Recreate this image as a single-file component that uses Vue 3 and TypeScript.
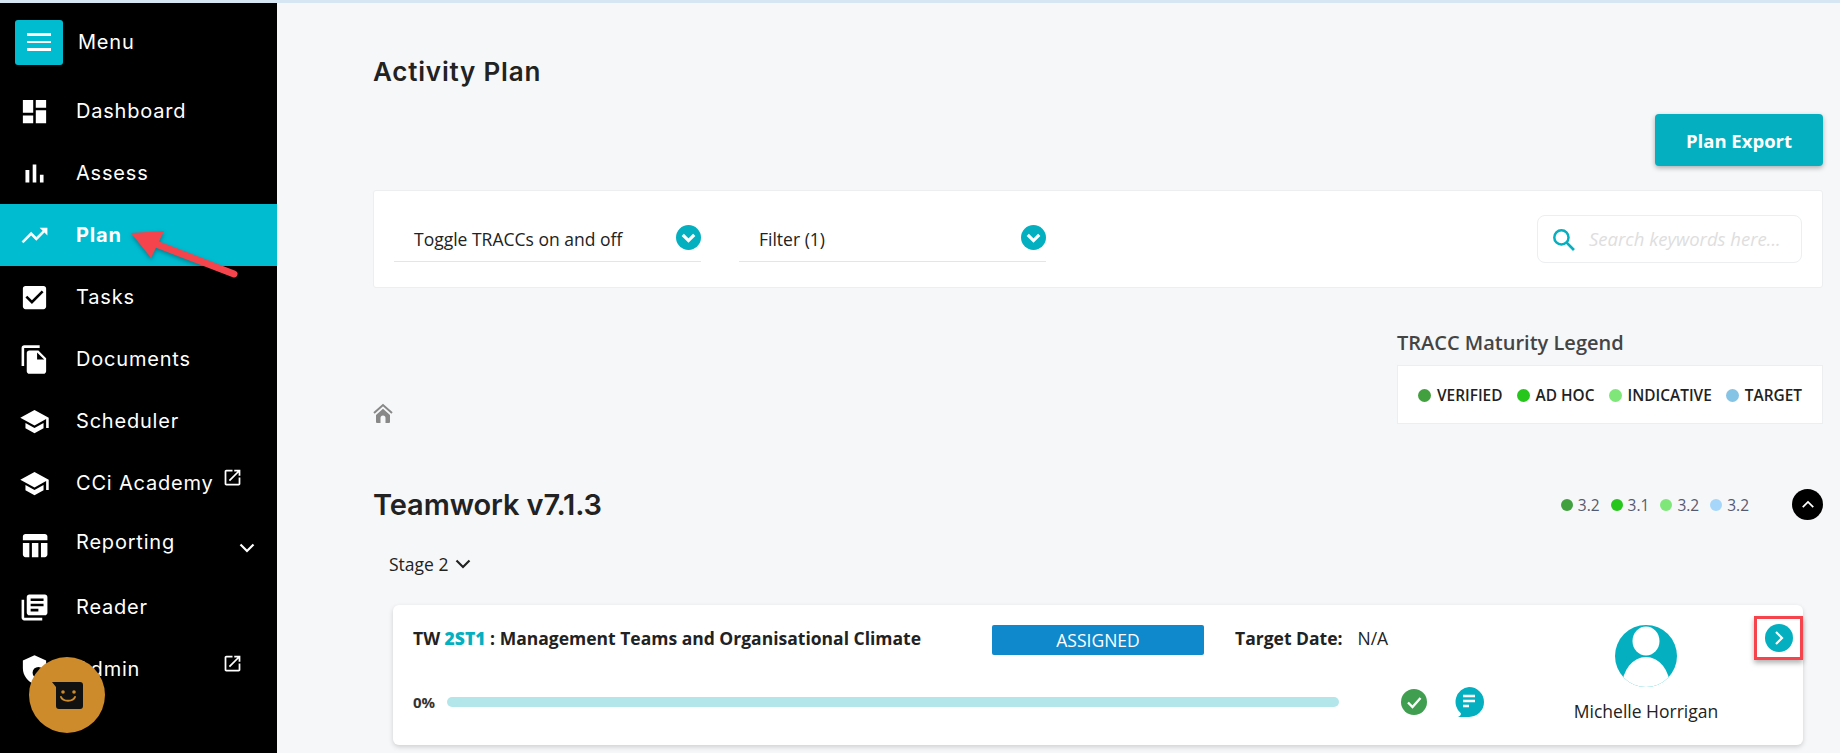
<script setup lang="ts">
interface NavItem {
  label: string
  path: string
  active?: boolean
  external?: boolean
  expand?: boolean
}
const launch = 'M19 19H5V5h7V3H5c-1.11 0-2 .9-2 2v14c0 1.1.89 2 2 2h14c1.1 0 2-.9 2-2v-7h-2v7zM14 3v2h3.59l-9.83 9.83 1.41 1.41L19 6.41V10h2V3h-7z'
const school = 'M5 13.18v4L12 21l7-3.82v-4L12 17l-7-3.82zM12 3L1 9l11 6 9-4.91V17h2V9L12 3z'
const nav: NavItem[] = [
  { label: 'Dashboard', path: 'M3 13h8V3H3v10zm0 8h8v-6H3v6zm10 0h8V11h-8v10zm0-18v6h8V3h-8z' },
  { label: 'Assess', path: 'M5 9.2h3V19H5zM10.6 5h2.8v14h-2.8zm5.6 8H19v6h-2.8z' },
  { label: 'Plan', active: true, path: 'M16 6l2.29 2.29-4.88 4.88-4-4L2 16.59 3.41 18l6-6 4 4 6.3-6.29L22 12V6z' },
  { label: 'Tasks', path: 'M19 3H5c-1.11 0-2 .9-2 2v14c0 1.1.89 2 2 2h14c1.11 0 2-.9 2-2V5c0-1.1-.89-2-2-2zm-9 14l-5-5 1.41-1.41L10 14.17l7.59-7.59L19 8l-9 9z' },
  { label: 'Documents', path: 'M16 1H4c-1.1 0-2 .9-2 2v14h2V3h12V1zm-1 4l6 6v10c0 1.1-.9 2-2 2H7.99C6.89 23 6 22.1 6 21l.01-14c0-1.1.89-2 1.99-2h7zm-1 7h5.5L14 6.5V12z' },
  { label: 'Scheduler', path: school },
  { label: 'CCi Academy', path: school, external: true },
  { label: 'Reporting', expand: true, path: 'M10 10.02h5V21h-5zM17 21h3c1.1 0 2-.9 2-2v-9h-5v11zm3-18H5c-1.1 0-2 .9-2 2v3h19V5c0-1.1-.9-2-2-2zM3 19c0 1.1.9 2 2 2h3V10H3v9z' },
  { label: 'Reader', path: 'M4 6H2v14c0 1.1.9 2 2 2h14v-2H4V6zm16-4H8c-1.1 0-2 .9-2 2v12c0 1.1.9 2 2 2h12c1.1 0 2-.9 2-2V4c0-1.1-.9-2-2-2zm-1 9H9V9h10v2zm-4 4H9v-2h6v2zm4-8H9V5h10v2z' },
  { label: 'Admin', external: true, path: 'M12 1L3 5v6c0 5.55 3.84 10.74 9 12 5.16-1.26 9-6.45 9-12V5l-9-4zm3 18a4.5 4.5 0 1 1 0-9 4.5 4.5 0 0 1 0 9z' }
]
const legend = [
  { label: 'VERIFIED', color: '#43a03f' },
  { label: 'AD HOC', color: '#27c61d' },
  { label: 'INDICATIVE', color: '#7fe67a' },
  { label: 'TARGET', color: '#86c4e6' }
]
const scores = [
  { value: '3.2', color: '#43a03f' },
  { value: '3.1', color: '#27c61d' },
  { value: '3.2', color: '#7fe67a' },
  { value: '3.2', color: '#a6d6fa' }
]
</script>

<template>
  <div class="page">
    <div class="strip"></div>
    <div class="body">
      <aside class="side">
        <div class="menu-row">
          <button class="burger"><span></span><span></span><span></span></button>
          <span class="menu-label">Menu</span>
        </div>
        <a v-for="n in nav" :key="n.label" class="nav" :class="{ active: n.active, lifted: n.expand }">
          <svg class="nav-icon" viewBox="0 0 24 24"><path :d="n.path" fill="#fff" fill-rule="evenodd" /></svg>
          <span class="nav-text">{{ n.label }}</span>
          <svg v-if="n.external" class="ext" viewBox="0 0 24 24"><path :d="launch" fill="#fff" /></svg>
          <svg v-if="n.expand" class="expand" viewBox="0 0 16 10"><path d="M1.5 1.5 8 8l6.500-6.500" fill="none" stroke="#fff" stroke-width="2.200" /></svg>
        </a>
      </aside>

      <main class="main">
        <h1 class="title">Activity Plan</h1>
        <div class="export-row"><button class="export">Plan Export</button></div>

        <section class="filters">
          <div class="select">
            <span>Toggle TRACCs on and off</span>
            <i class="round"><svg viewBox="0 0 24 24"><path d="M6.500 9.500 12 15l5.500-5.500" fill="none" stroke="#fff" stroke-width="3" /></svg></i>
          </div>
          <div class="select">
            <span>Filter (1)</span>
            <i class="round"><svg viewBox="0 0 24 24"><path d="M6.500 9.500 12 15l5.500-5.500" fill="none" stroke="#fff" stroke-width="3" /></svg></i>
          </div>
          <div class="search">
            <svg viewBox="0 0 22 22"><circle cx="9" cy="9" r="6.800" fill="none" stroke="#04b0c0" stroke-width="2.400" /><path d="M14 14l7 7" stroke="#04b0c0" stroke-width="2.600" /></svg>
            <span>Search keywords here...</span>
          </div>
        </section>

        <div class="crumb-row">
          <svg class="home" viewBox="0 0 20 20"><path d="M1 10 10 2l9 8" fill="none" stroke="#888" stroke-width="2" /><path d="M3 12 10 5.800 17 12v7a1 1 0 0 1-1 1h-3.500v-5a2.500 2.500 0 0 0-5 0v5H4a1 1 0 0 1-1-1z" fill="#888" /></svg>
          <div class="legend-wrap">
            <h3>TRACC Maturity Legend</h3>
            <div class="legend">
              <span v-for="l in legend" :key="l.label" class="legend-item"><i :style="{ background: l.color }"></i>{{ l.label }}</span>
            </div>
          </div>
        </div>

        <div class="team-row">
          <h2>Teamwork v7.1.3</h2>
          <div class="scores">
            <span v-for="(s, i) in scores" :key="i" class="score"><i :style="{ background: s.color }"></i>{{ s.value }}</span>
          </div>
          <button class="up"><svg viewBox="0 0 16 10"><path d="M2 8l6-6 6 6" fill="none" stroke="#fff" stroke-width="2" /></svg></button>
        </div>

        <div class="stage">Stage 2 <svg viewBox="0 0 16 10"><path d="M1.500 1.500 8 8l6.500-6.500" fill="none" stroke="#222" stroke-width="2.200" /></svg></div>

        <article class="card">
          <div class="card-left">
            <div class="card-top">
              <div class="card-title">TW <b>2ST1</b> : Management Teams and Organisational Climate</div>
              <div class="badge">ASSIGNED</div>
              <div class="target"><strong>Target Date:</strong><span>N/A</span></div>
            </div>
            <div class="card-bottom">
              <span class="pct">0%</span>
              <div class="bar"></div>
              <svg class="check" viewBox="0 0 26 26"><circle cx="13" cy="13" r="13" fill="#3f9e4f" /><path d="M7 13.500l4.500 4.500L19.500 9" fill="none" stroke="#fff" stroke-width="2.400" /></svg>
              <svg class="chat" viewBox="0 0 30 30"><path d="M15 0a15 15 0 0 1 0 30H4c2-1 3-2 3-3.500A15 15 0 0 1 15 0z" fill="#04b0c0" /><path d="M9 9h12M9 14h12M9 19h6" stroke="#fff" stroke-width="2.400" /></svg>
            </div>
          </div>
          <div class="person">
            <svg class="avatar" viewBox="0 0 62 62">
              <defs><clipPath id="ava"><circle cx="31" cy="31" r="31" /></clipPath></defs>
              <circle cx="31" cy="31" r="31" fill="#04b0c0" />
              <g clip-path="url(#ava)" fill="#fff"><ellipse cx="31" cy="16" rx="13.500" ry="14.500" /><ellipse cx="31" cy="62" rx="24" ry="30" /></g>
            </svg>
            <div class="name">Michelle Horrigan</div>
          </div>
          <div class="next-box">
            <i class="next"><svg viewBox="0 0 12 16"><path d="M3 2l6 6-6 6" fill="none" stroke="#fff" stroke-width="2.200" /></svg></i>
          </div>
        </article>
      </main>
    </div>

    <svg class="arrow" viewBox="0 0 130 70" aria-hidden="true">
      <path d="M114 54 36 24" stroke="#f5444b" stroke-width="7" stroke-linecap="round" />
      <path d="M11 13 44 11 31 38z" fill="#f5444b" />
    </svg>
    <div class="bot">
      <svg viewBox="0 0 31 27"><path d="M0 0h28a3 3 0 0 1 3 3v21a3 3 0 0 1-3 3H7a3 3 0 0 1-3-3V5z" fill="#111" /><circle cx="11" cy="10" r="1.800" fill="#cd8b2b" /><circle cx="22" cy="10" r="1.800" fill="#cd8b2b" /><path d="M9 15c2 5 12 5 14 0" fill="none" stroke="#cd8b2b" stroke-width="2" stroke-linecap="round" /></svg>
    </div>
  </div>
</template>

<style>
html, body { margin: 0; background: #f6f7f9; }
</style>

<style scoped>
.page { position: relative; width: 1840px; height: 753px; overflow: hidden; background: #f6f7f9; font-family: "Open Sans", sans-serif; color: #222; }
.strip { height: 3px; background: #d6e6f2; }
.body { display: flex; height: 750px; }
.side { width: 277px; flex: none; background: #000; color: #fff; font-family: Inter, sans-serif; }
.menu-row { display: flex; align-items: center; height: 77px; padding-left: 15px; box-sizing: border-box; }
.burger { width: 48px; height: 45px; border: 0; border-radius: 3px; background: #00bcd0; display: flex; flex-direction: column; align-items: center; justify-content: center; gap: 5px; padding: 0; margin-top: 1px; }
.burger span { display: block; width: 24px; height: 2.500px; background: #fff; }
.menu-label { margin-left: 15px; font-size: 20px; letter-spacing: 0.8px; }
.nav { display: flex; align-items: center; height: 62px; position: relative; padding-left: 19px; }
.nav.active { background: #00bcd0; font-weight: 700; }
.nav-icon { width: 31px; height: 31px; flex: none; }
.nav-text { margin-left: 26px; font-size: 20px; letter-spacing: 0.8px; white-space: nowrap; }
.lifted .nav-text { margin-bottom: 6px; }
.ext { width: 21px; height: 21px; position: absolute; left: 222px; top: 15px; }
.expand { width: 16px; height: 10px; position: absolute; left: 239px; top: 29px; }
.main { flex: 1; min-width: 0; padding: 0 17px 0 96px; }
.title { margin: 54px 0 0; font: 600 26px/30px Inter, sans-serif; letter-spacing: 0.8px; color: #222; }
.export-row { display: flex; justify-content: flex-end; margin-top: 27px; }
.export { width: 168px; height: 52px; border: 0; border-radius: 4px; background: #04b0c0; color: #fff; font: 700 18.5px "Open Sans", sans-serif; box-shadow: 0 2px 5px rgba(0,0,0,.3); }
.filters { margin-top: 24px; height: 98px; box-sizing: border-box; background: #fff; border: 1px solid #eceef0; border-radius: 3px; display: flex; padding: 24px 20px 0; align-items: flex-start; }
.select { width: 307px; height: 47px; box-sizing: border-box; border-bottom: 1px solid #e3e5e8; display: flex; justify-content: space-between; padding: 10px 0 0 20px; font-size: 17.5px; margin-right: 38px; position: relative; }
.select span { line-height: 29px; }
.round { width: 25px; height: 25px; border-radius: 50%; background: #04b0c0; display: flex; }
.round svg { width: 25px; height: 25px; }
.search { margin-left: auto; width: 265px; height: 48px; box-sizing: border-box; border: 1px solid #eceef0; border-radius: 8px; display: flex; align-items: center; padding-left: 14px; font-size: 18.5px; font-style: italic; color: #dedede; white-space: nowrap; overflow: hidden; }
.search span { margin-bottom: 2px; }
.search svg { width: 23px; height: 23px; flex: none; margin-right: 14px; }
.crumb-row { display: flex; justify-content: space-between; align-items: flex-end; margin-top: 43px; }
.home { width: 20px; height: 20px; margin-bottom: 1px; }
.legend-wrap { width: 426px; }
.legend-wrap h3 { margin: 0; font: 600 20px/24px "Open Sans", sans-serif; color: #444; }
.legend { margin-top: 10px; height: 59px; box-sizing: border-box; background: #fff; border: 1px solid #eceef0; display: flex; align-items: center; justify-content: space-between; padding: 1px 20px 0; font-size: 15.4px; font-weight: 600; color: #222; }
.legend-item { display: flex; align-items: center; gap: 6px; white-space: nowrap; }
.legend-item i { width: 13px; height: 13px; border-radius: 50%; }
.team-row { display: flex; align-items: center; height: 31px; margin-top: 65px; }
.team-row h2 { margin: 0; font: 600 29px/31px Inter, sans-serif; letter-spacing: -0.1px; color: #222; }
.scores { margin-left: auto; margin-right: 43px; display: flex; gap: 11px; font-size: 15.5px; color: #555a70; }
.score { display: flex; align-items: center; gap: 5px; }
.score i { width: 12px; height: 12px; border-radius: 50%; }
.up { width: 31px; height: 31px; border-radius: 50%; border: 0; padding: 0; background: #000; display: flex; align-items: center; justify-content: center; }
.up svg { width: 14px; height: 9px; }
.stage { margin: 33px 0 0 16px; font-size: 17.5px; line-height: 22px; display: flex; align-items: center; gap: 3px; }
.stage svg { width: 16px; height: 10px; margin-left: 4px; }
.card { margin: 30px 20px 0; height: 140px; background: #fff; border-radius: 6px; box-shadow: 0 2px 5px rgba(0,0,0,.16); padding-left: 20px; display: flex; }
.card-left { width: 1158px; flex: none; padding-top: 20px; }
.card-top { display: flex; align-items: center; height: 30px; }
.card-title { width: 579px; flex: none; font-size: 17.5px; font-weight: 700; white-space: nowrap; margin-bottom: 4px; }
.card-title b { color: #04b0c0; }
.badge { width: 212px; height: 30px; flex: none; border-radius: 2px; background: #1088cc; color: #fff; font-size: 17.5px; line-height: 30px; text-align: center; }
.target { margin-left: 31px; margin-bottom: 4px; font-size: 17.5px; display: flex; gap: 15px; white-space: nowrap; }
.card-bottom { display: flex; align-items: center; height: 30px; margin-top: 32px; }
.pct { width: 34px; flex: none; font-size: 15px; font-weight: 700; color: #333; }
.bar { width: 892px; height: 10px; border-radius: 5px; background: #b2e6ea; flex: none; }
.check { width: 26px; height: 26px; margin-left: 62px; flex: none; }
.chat { width: 30px; height: 30px; margin-left: 27px; flex: none; }
.person { width: 150px; flex: none; padding-top: 20px; display: flex; flex-direction: column; align-items: center; }
.avatar { width: 62px; height: 62px; }
.name { margin-top: 13px; font-size: 17.5px; line-height: 22px; white-space: nowrap; }
.next-box { margin: 11px 0 0 33px; width: 49px; height: 44px; box-sizing: border-box; border: 3px solid #f5444b; box-shadow: 0 3px 5px rgba(0,0,0,.3); display: flex; align-items: center; justify-content: center; }
.next { width: 28px; height: 28px; border-radius: 50%; background: #04b0c0; display: flex; align-items: center; justify-content: center; }
.next svg { width: 12px; height: 16px; }
.arrow { position: absolute; left: 120px; top: 220px; width: 130px; height: 70px; filter: drop-shadow(0 2px 2px rgba(0,0,0,.3)); }
.bot { position: absolute; left: 29px; top: 657px; width: 76px; height: 76px; border-radius: 50%; background: #cd8b2b; display: flex; align-items: center; justify-content: center; }
.bot svg { width: 31px; height: 27px; }
</style>
